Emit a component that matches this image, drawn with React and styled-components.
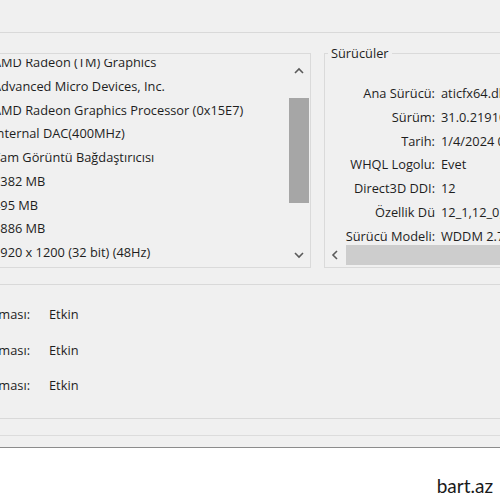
import React from 'react'
import styled, { createGlobalStyle } from 'styled-components'

const Global = createGlobalStyle`
  html, body {
    margin: 0;
    padding: 0;
    background: #ffffff;
  }
  body {
    font-family: "Open Sans", "Noto Sans", "Liberation Sans", sans-serif;
    font-size: 12.8px;
    color: #1e1e1e;
  }
`

const Page = styled.div`
  width: 500px;
  height: 500px;
  overflow: hidden;
  display: flex;
  flex-direction: column;
`

const Window = styled.div`
  height: 448px;
  flex-shrink: 0;
  box-sizing: border-box;
  background: #f0f0f0;
  border-bottom: 1px solid #8c8c8c;
  padding-top: 32px;
  display: flex;
  flex-direction: column;
`

const TabBody = styled.div`
  border-top: 1px solid #d9d9d9;
  display: flex;
  flex-direction: column;
`

const TopRow = styled.div`
  display: flex;
  align-items: flex-start;
  gap: 13px;
  padding-top: 20px;
  height: 251px;
  box-sizing: border-box;
`

/* device list, scrolled so its first line is partly hidden */
const ListBox = styled.div`
  flex-shrink: 0;
  margin-left: -20px;
  width: 331px;
  height: 215px;
  box-sizing: border-box;
  border: 1px solid #dadada;
  display: flex;
  overflow: hidden;
`

const Lines = styled.div`
  flex: 1;
  overflow: hidden;
  padding-left: 12px;
  margin-top: 5px;
`

const Scrolled = styled.div`
  margin-top: -8px;
`

const Line = styled.div`
  height: 23.75px;
  line-height: 23.75px;
  white-space: nowrap;
`

const VScroll = styled.div`
  width: 20px;
  margin-right: 1px;
  display: flex;
  flex-direction: column;
`

const ArrowBtn = styled.div`
  height: ${p => p.h}px;
  width: ${p => (p.w ? `${p.w}px` : 'auto')};
  display: flex;
  align-items: center;
  justify-content: center;
  flex-shrink: 0;
`

const Track = styled.div`
  flex: 1;
  padding-top: 8px;
`

const Thumb = styled.div`
  height: 105px;
  background: #a6a6a6;
`

const Group = styled.fieldset`
  margin: -8px 0 0;
  padding: 0;
  width: 200px;
  min-width: 0;
  flex-shrink: 0;
  height: 223px;
  box-sizing: border-box;
  border: 1px solid #dadada;
  border-right: none;
  display: flex;
  flex-direction: column;
`

const Legend = styled.legend`
  margin-left: 3px;
  padding: 0 3px;
  line-height: 17px;
`

const Props = styled.div`
  display: grid;
  grid-template-columns: 110px auto;
  grid-auto-rows: 23.75px;
  column-gap: 6px;
  padding-top: 20px;
  height: 183px;
  box-sizing: border-box;
  overflow: hidden;
`

const Key = styled.div`
  line-height: 23.75px;
  text-align: right;
  white-space: nowrap;
`

const Val = styled.div`
  line-height: 23.75px;
  white-space: nowrap;
`

const HScroll = styled.div`
  height: 20px;
  display: flex;
  margin-top: auto;
  margin-bottom: 2px;
`

const HTrack = styled.div`
  flex: 1;
  background: #cdcdcd;
`

const Features = styled.div`
  border-top: 1px solid #d9d9d9;
  height: 134px;
  box-sizing: border-box;
  padding-top: 12px;
  margin-left: -170px;
  display: grid;
  grid-template-columns: 200px auto;
  grid-auto-rows: 35.5px;
  column-gap: 19px;
`

const FeatureKey = styled.div`
  line-height: 35.5px;
  text-align: right;
  white-space: nowrap;
`

const FeatureVal = styled.div`
  line-height: 35.5px;
`

const Divider = styled.div`
  border-top: 1px solid #d9d9d9;
  border-bottom: 1px solid #dcdcdc;
  height: 16px;
`

const Footer = styled.div`
  flex: 1;
  display: flex;
  align-items: flex-end;
  justify-content: flex-end;
  padding: 0 7px 1px 0;
  font-family: Lato, "Open Sans", sans-serif;
  font-size: 19px;
  line-height: 26px;
  color: #1a1a1a;
`

const Chevron = ({ dir }) => {
  const d = {
    up: 'M1 6 L5 2 L9 6',
    down: 'M1 2 L5 6 L9 2',
    left: 'M6 1 L2 5 L6 9',
  }[dir]
  return (
    <svg width="10" height="10" viewBox="0 0 10 10">
      <path d={d} fill="none" stroke="#5a5a5a" strokeWidth="1.6" />
    </svg>
  )
}

const device = [
  'AMD Radeon (TM) Graphics',
  'Advanced Micro Devices, Inc.',
  'AMD Radeon Graphics Processor (0x15E7)',
  'Internal DAC(400MHz)',
  'Tam Görüntü Bağdaştırıcısı',
  '7382 MB',
  '495 MB',
  '6886 MB',
  '1920 x 1200 (32 bit) (48Hz)',
]

const drivers = [
  ['Ana Sürücü:', 'aticfx64.dll,aticfx64.dll'],
  ['Sürüm:', '31.0.21910.5'],
  ['Tarih:', '1/4/2024 03:00:00'],
  ['WHQL Logolu:', 'Evet'],
  ['Direct3D DDI:', '12'],
  ['Özellik Dü', '12_1,12_0,11_1,11_0'],
  ['Sürücü Modeli:', 'WDDM 2.7'],
]

const features = [
  'DirectDraw Hızlandırması:',
  'Direct3D Hızlandırması:',
  'AGP Doku Hızlandırması:',
]

export default function App() {
  return (
    <Page>
      <Global />
      <Window>
        <TabBody>
          <TopRow>
            <ListBox>
              <Lines>
                <Scrolled>
                  {device.map(t => <Line key={t}>{t}</Line>)}
                </Scrolled>
              </Lines>
              <VScroll>
                <ArrowBtn h={36}><Chevron dir="up" /></ArrowBtn>
                <Track><Thumb /></Track>
                <ArrowBtn h={22}><Chevron dir="down" /></ArrowBtn>
              </VScroll>
            </ListBox>
            <Group>
              <Legend>Sürücüler</Legend>
              <Props>
                {drivers.map(([k, v]) => (
                  <React.Fragment key={k}>
                    <Key>{k}</Key>
                    <Val>{v}</Val>
                  </React.Fragment>
                ))}
              </Props>
              <HScroll>
                <ArrowBtn h={20} w={21}><Chevron dir="left" /></ArrowBtn>
                <HTrack />
              </HScroll>
            </Group>
          </TopRow>
          <Features>
            {features.map(f => (
              <React.Fragment key={f}>
                <FeatureKey>{f}</FeatureKey>
                <FeatureVal>Etkin</FeatureVal>
              </React.Fragment>
            ))}
          </Features>
          <Divider />
        </TabBody>
      </Window>
      <Footer>bart.az</Footer>
    </Page>
  )
}
